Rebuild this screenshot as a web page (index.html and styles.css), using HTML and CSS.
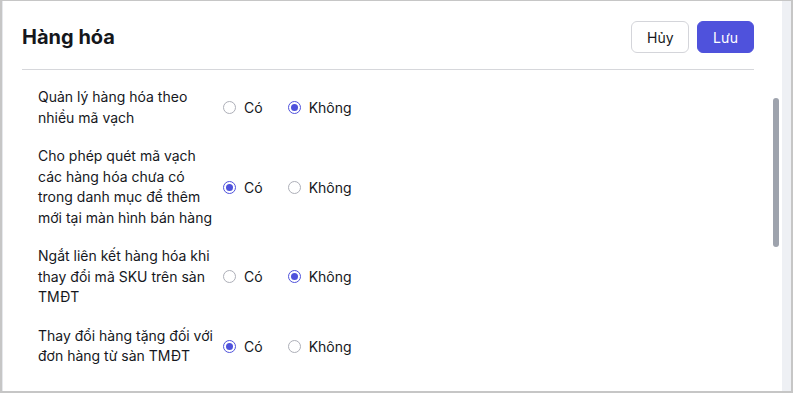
FILE: index.html
```html
<!DOCTYPE html>
<html lang="vi">
<head>
    <meta charset="UTF-8">
    <meta name="viewport" content="width=device-width, initial-scale=1.0">
    <title>Hàng hóa</title>
    <link rel="stylesheet" href="styles.css">
</head>
<body>
    <div class="frame">
        <div class="panel">
            <div class="header">
                <h1>Hàng hóa</h1>
                <div class="actions">
                    <button class="btn btn-cancel">Hủy</button>
                    <button class="btn btn-save">Lưu</button>
                </div>
            </div>
            <div class="content">
                <div class="row">
                    <div class="label">Quản lý hàng hóa theo nhiều mã vạch</div>
                    <div class="options">
                        <label class="option"><span class="radio"></span>Có</label>
                        <label class="option"><span class="radio checked"></span>Không</label>
                    </div>
                </div>
                <div class="row">
                    <div class="label">Cho phép quét mã vạch các hàng hóa chưa có trong danh mục để thêm mới tại màn hình bán hàng</div>
                    <div class="options">
                        <label class="option"><span class="radio checked"></span>Có</label>
                        <label class="option"><span class="radio"></span>Không</label>
                    </div>
                </div>
                <div class="row">
                    <div class="label">Ngắt liên kết hàng hóa khi thay đổi mã SKU trên sàn TMĐT</div>
                    <div class="options">
                        <label class="option"><span class="radio"></span>Có</label>
                        <label class="option"><span class="radio checked"></span>Không</label>
                    </div>
                </div>
                <div class="row">
                    <div class="label">Thay đổi hàng tặng đối với đơn hàng từ sàn TMĐT</div>
                    <div class="options">
                        <label class="option"><span class="radio checked"></span>Có</label>
                        <label class="option"><span class="radio"></span>Không</label>
                    </div>
                </div>
                <div class="scroll-thumb"></div>
            </div>
        </div>
    </div>
</body>
</html>
```

FILE: styles.css
```css
body {
    margin: 0;
    font-family: Inter, "Noto Sans", sans-serif;
    color: #16181d;
}
.frame {
    box-sizing: border-box;
    height: 393px;
    border: 2px solid #c6c6c6;
    border-top-width: 1px;
    background-color: #eef0f4;
    display: flex;
}
.panel {
    flex: 1;
    margin-right: 9px;
    background-color: #fff;
    border-left: 1px solid #e6e8ec;
    display: flex;
    flex-direction: column;
    overflow: hidden;
}
.header {
    margin: 0 28px 0 19px;
    padding: 20px 0 16px 0;
    border-bottom: 1px solid #d6d7db;
    display: flex;
    align-items: center;
    justify-content: space-between;
}
h1 {
    margin: 0;
    font-size: 20px;
    font-weight: 700;
    color: #15171c;
}
.actions {
    display: flex;
    gap: 8px;
}
.btn {
    height: 32px;
    padding: 0 15px;
    font-family: inherit;
    font-size: 14px;
    border-radius: 6px;
    cursor: pointer;
}
.btn-cancel {
    background-color: #fff;
    color: #16181d;
    border: 1px solid #d4d5da;
    width: 58px;
}
.btn-save {
    background-color: #4f52dc;
    color: #fff;
    border: 1px solid #4f52dc;
    width: 57px;
}
.content {
    position: relative;
    flex: 1;
    padding: 17px 0 0 35px;
    display: flex;
    flex-direction: column;
    gap: 18px;
}
.row {
    display: flex;
    align-items: center;
}
.label {
    width: 176px;
    font-size: 14px;
    line-height: 20.5px;
}
.options {
    margin-left: 9px;
    display: flex;
    gap: 25px;
}
.option {
    display: flex;
    align-items: center;
    gap: 8px;
    font-size: 14px;
}
.radio {
    box-sizing: border-box;
    width: 13px;
    height: 13px;
    border: 1px solid #adafb8;
    border-radius: 50%;
    display: flex;
    align-items: center;
    justify-content: center;
}
.radio.checked {
    border-color: #4f52dc;
}
.radio.checked::after {
    content: "";
    width: 7px;
    height: 7px;
    border-radius: 50%;
    background-color: #4f52dc;
}
.scroll-thumb {
    position: absolute;
    top: 28px;
    right: 3px;
    width: 6px;
    height: 149px;
    border-radius: 3px;
    background-color: #9ea3ad;
}
```
